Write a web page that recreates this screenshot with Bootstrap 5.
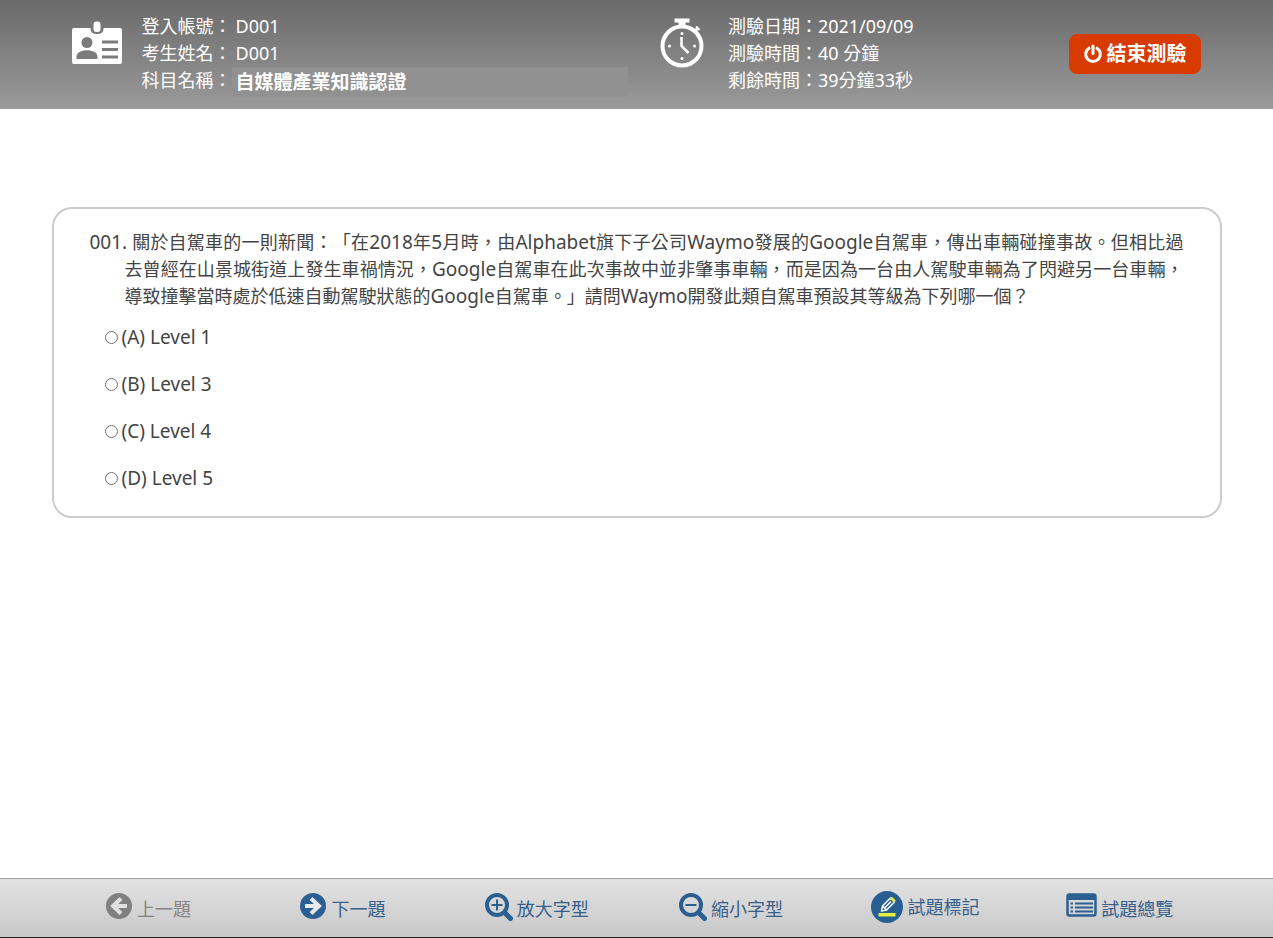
<!DOCTYPE html>
<html lang="zh-Hant">
<head>
<meta charset="utf-8">
<meta name="viewport" content="width=device-width, initial-scale=1">
<title>自媒體產業知識認證</title>
<link href="https://cdn.jsdelivr.net/npm/bootstrap@5.3.0/dist/css/bootstrap.min.css" rel="stylesheet">
<style>
  body {
    font-family: "Noto Sans", "Noto Sans CJK TC", sans-serif;
    font-size: 18px;
    line-height: 27px;
    color: #444;
    background: #fff;
  }
  .exam-wrap { width: calc(100% - 103px); }
  .exam-header {
    background: linear-gradient(#6a6a6a, #9a9a9a);
    color: #fff;
    padding: 13px 0 12px;
  }
  .exam-header dt { font-weight: 400; }
  .info-user { width: 52%; padding: 0 32px 0 20px; }
  .subject-name {
    background: #919191;
    font-size: 19px;
    font-weight: 700;
    padding: 2px 4px 1px;
  }
  .btn-finish {
    --bs-btn-color: #fff;
    --bs-btn-bg: #d83b01;
    --bs-btn-border-color: #d83b01;
    --bs-btn-hover-color: #fff;
    --bs-btn-hover-bg: #b93200;
    --bs-btn-hover-border-color: #b93200;
    --bs-btn-border-radius: 8px;
    --bs-btn-padding-x: 13px;
    --bs-btn-padding-y: 6px;
    --bs-btn-font-size: 20px;
    --bs-btn-font-weight: 700;
    --bs-btn-line-height: 26px;
    margin: 21px 21px 0 0;
  }
  .question-card {
    --bs-card-border-width: 2px;
    --bs-card-border-color: #ccc;
    --bs-card-border-radius: 20px;
    --bs-card-inner-border-radius: 18px;
    --bs-card-spacer-x: 36px;
    --bs-card-spacer-y: 20px;
    --bs-card-color: #444;
    margin-top: 98px;
    margin-bottom: 40px;
  }
  .question-text {
    padding-left: 35px;
    text-indent: -35px;
    text-align: justify;
    text-spacing-trim: space-all;
    font-feature-settings: "chws" 0, "halt" 0;
    margin-bottom: 14px;
  }
  .question-text span, .options label { font-size: 19px; }
  .question-text span { line-height: 1; }
  .options { display: grid; gap: 20px; padding: 0 0 4px 15px; }
  .options input { width: 13px; height: 13px; margin: 0; }
  .exam-footer {
    background: linear-gradient(#e2e2e2, #c8c8c8);
    border-top: 1px solid #a0a0a0;
    border-bottom: 1px solid #222;
    height: 60px;
    padding-bottom: 2px;
  }
  .tool-nav { width: 91.6%; margin-left: 4%; }
  .tool-btn {
    --bs-btn-color: #365f8c;
    --bs-btn-hover-color: #1f4468;
    --bs-btn-disabled-color: #858585;
    --bs-btn-disabled-opacity: 1;
    --bs-btn-disabled-border-color: transparent;
    --bs-btn-padding-x: 0;
    --bs-btn-padding-y: 0;
    --bs-btn-font-size: 18px;
    --bs-btn-line-height: 27px;
    --bs-btn-border-width: 0;
  }
</style>
</head>
<body class="d-flex flex-column min-vh-100">

<header class="exam-header">
  <div class="exam-wrap mx-auto d-flex align-items-start">
    <div class="info-user d-flex align-items-start">
      <svg class="mt-2 flex-shrink-0" width="50" height="44" viewBox="0 0 50 44" aria-hidden="true">
        <path fill="#fff" d="M2 7H18.500V8Q18.500 13 25 13Q31.500 13 31.500 8V7H48Q50 7 50 9V41Q50 43 48 43H2Q0 43 0 41V9Q0 7 2 7Z"/>
        <rect x="21.500" y="0.500" width="7" height="10.500" rx="3" fill="#fff"/>
        <g fill="#7b7b7b"><circle cx="15" cy="21.500" r="5.500"/><path d="M4.500 38V35.500C4.500 27 25.500 27 25.500 35.500V38Z"/><path d="M30 19.500h16v3H30zM30 27h16v3H30zM30 34.500h16v3H30z"/></g>
      </svg>
      <dl class="mb-0 ms-3 ps-1 flex-grow-1">
        <div class="d-flex"><dt>登入帳號：</dt><dd class="mb-0 ms-1">D001</dd></div>
        <div class="d-flex"><dt>考生姓名：</dt><dd class="mb-0 ms-1">D001</dd></div>
        <div class="d-flex"><dt>科目名稱：</dt><dd class="mb-0 subject-name flex-grow-1">自媒體產業知識認證</dd></div>
      </dl>
    </div>
    <div class="d-flex align-items-start">
      <svg class="mt-1 flex-shrink-0" width="44" height="52" viewBox="0 0 44 52" aria-hidden="true">
        <g fill="none" stroke="#fff"><circle cx="22" cy="29" r="19.500" stroke-width="4"/><path d="M14.500 3.500H29.500" stroke-width="4"/><path d="M22 4V10" stroke-width="7"/><path d="M34 15L38.500 10.500" stroke-width="3"/><path d="M21.500 20V29L28.500 36" stroke-width="2.500"/><path d="M36 9.500L39.500 13" stroke-width="2"/></g>
        <g fill="#fff"><circle cx="22" cy="16.500" r="1.500"/><circle cx="9.500" cy="29" r="1.500"/><circle cx="34.500" cy="29" r="1.500"/><circle cx="22" cy="41.500" r="1.500"/></g>
      </svg>
      <dl class="mb-0 ms-4">
        <div class="d-flex"><dt>測驗日期：</dt><dd class="mb-0">2021/09/09</dd></div>
        <div class="d-flex"><dt>測驗時間：</dt><dd class="mb-0">40 分鐘</dd></div>
        <div class="d-flex"><dt>剩餘時間：</dt><dd class="mb-0">39分鐘33秒</dd></div>
      </dl>
    </div>
    <button type="button" class="btn btn-finish ms-auto d-flex align-items-center gap-1">
      <svg width="20" height="20" viewBox="0 0 20 20" fill="none" stroke="#fff" stroke-width="3" stroke-linecap="round" aria-hidden="true"><path d="M6 4.200A7.300 7.300 0 1 0 14 4.200M10 2V9.500"/></svg>
      結束測驗
    </button>
  </div>
</header>

<main class="exam-wrap mx-auto flex-grow-1">
  <form class="card question-card">
    <div class="card-body">
      <p class="question-text" id="question"><span>001.</span> 關於自駕車的一則新聞：「在<span>2018</span>年<span>5</span>月時，由<span>Alphabet</span>旗下子公司<span>Waymo</span>發展的<span>Google</span>自駕車，傳出車輛碰撞事故。但相比過去曾經在山景城街道上發生車禍情況，<span>Google</span>自駕車在此次事故中並非肇事車輛，而是因為一台由人駕駛車輛為了閃避另一台車輛，導致撞擊當時處於低速自動駕駛狀態的<span>Google</span>自駕車。」請問<span>Waymo</span>開發此類自駕車預設其等級為下列哪一個？</p>
      <div class="options" role="radiogroup" aria-labelledby="question">
        <div class="d-flex align-items-center"><input type="radio" name="answer" id="optA" value="A"><label class="ps-1" for="optA">(A) Level 1</label></div>
        <div class="d-flex align-items-center"><input type="radio" name="answer" id="optB" value="B"><label class="ps-1" for="optB">(B) Level 3</label></div>
        <div class="d-flex align-items-center"><input type="radio" name="answer" id="optC" value="C"><label class="ps-1" for="optC">(C) Level 4</label></div>
        <div class="d-flex align-items-center"><input type="radio" name="answer" id="optD" value="D"><label class="ps-1" for="optD">(D) Level 5</label></div>
      </div>
    </div>
  </form>
</main>

<footer class="exam-footer d-flex align-items-center">
  <nav class="tool-nav row row-cols-6 g-0" aria-label="測驗工具">
    <div class="col d-flex justify-content-center"><button type="button" class="btn tool-btn d-flex align-items-center gap-1" disabled>
      <svg width="28" height="28" viewBox="0 0 28 28" aria-hidden="true"><circle cx="14" cy="13" r="13" fill="#808080"/><path d="M16 5.500L8 13L16 20.500M8.500 13H22" fill="none" stroke="#e0e0e0" stroke-width="4"/></svg>
      <span class="pt-1">上一題</span></button></div>
    <div class="col d-flex justify-content-center"><button type="button" class="btn tool-btn d-flex align-items-center gap-1">
      <svg width="28" height="28" viewBox="0 0 28 28" aria-hidden="true"><circle cx="14" cy="13" r="13" fill="#2b6094"/><path d="M12 5.500L20 13L12 20.500M19.500 13H6" fill="none" stroke="#e6eaee" stroke-width="4"/></svg>
      <span class="pt-1">下一題</span></button></div>
    <div class="col d-flex justify-content-center"><button type="button" class="btn tool-btn d-flex align-items-center gap-1">
      <svg width="28" height="28" viewBox="0 0 28 28" fill="none" stroke="#2b5f8f" aria-hidden="true"><circle cx="12" cy="12" r="10" stroke-width="4"/><path d="M19.500 19.500L25.500 25.500" stroke-width="5" stroke-linecap="round"/><path d="M6.500 12H17.500M12 6.500V17.500" stroke-width="2"/></svg>
      <span class="pt-1">放大字型</span></button></div>
    <div class="col d-flex justify-content-center"><button type="button" class="btn tool-btn d-flex align-items-center gap-1">
      <svg width="28" height="28" viewBox="0 0 28 28" fill="none" stroke="#2b5f8f" aria-hidden="true"><circle cx="12" cy="12" r="10" stroke-width="4"/><path d="M19.500 19.500L25.500 25.500" stroke-width="5" stroke-linecap="round"/><path d="M6.500 12H17.500" stroke-width="2"/></svg>
      <span class="pt-1">縮小字型</span></button></div>
    <div class="col d-flex justify-content-center"><button type="button" class="btn tool-btn d-flex align-items-center gap-1">
      <svg width="32" height="32" viewBox="0 0 32 32" aria-hidden="true"><circle cx="16" cy="16" r="16" fill="#275f93"/><path d="M7.500 22h17v3.500h-17z" fill="#e6ee3c"/><g fill="none" stroke="#fff" stroke-width="1.500" stroke-linejoin="round"><path d="M10.500 20L11.500 15L19.500 7L23.500 11L15.500 19Z"/><path d="M11.500 15L15.500 19M13.500 17L20 10.500"/></g><path d="M19 7.500L21 5.800L24.800 9.500L23 11.500Z" fill="#e6ee3c"/></svg>
      <span>試題標記</span></button></div>
    <div class="col d-flex justify-content-center"><button type="button" class="btn tool-btn d-flex align-items-center gap-1">
      <svg width="31" height="28" viewBox="0 0 31 28" aria-hidden="true"><rect x="1.500" y="1.500" width="28" height="21" rx="2" fill="none" stroke="#2b5f93" stroke-width="2.500"/><path d="M1 1h29v6H1z" fill="#2b5f93"/><path d="M9 10.500H27M9 14.500H27M9 18.500H27M4.500 10.500H7M4.500 14.500H7M4.500 18.500H7" stroke="#2b5f93" stroke-width="2"/></svg>
      <span class="pt-1">試題總覽</span></button></div>
  </nav>
</footer>

<script src="https://cdn.jsdelivr.net/npm/bootstrap@5.3.0/dist/js/bootstrap.bundle.min.js"></script>
</body>
</html>
